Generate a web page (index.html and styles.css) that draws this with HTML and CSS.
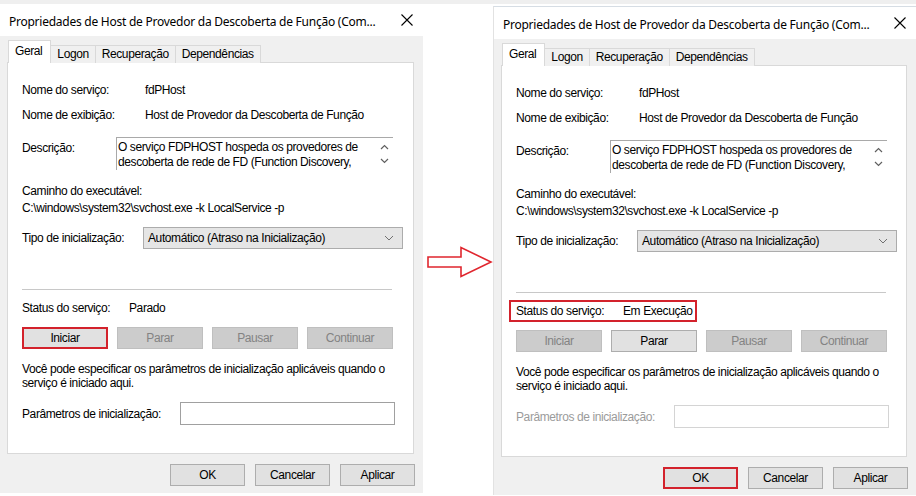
FILE: index.html
```html
<!DOCTYPE html>
<html lang="pt-BR">
<head>
    <meta charset="UTF-8">
    <title>Propriedades de Host de Provedor da Descoberta de Função</title>
    <link rel="stylesheet" href="styles.css">
</head>
<body>
<div class="screen">

    <!-- Antes: serviço parado -->
    <div class="dialog dialog-left">
        <div class="titlebar">
            <span class="title">Propriedades de Host de Provedor da Descoberta de Função (Com...</span>
            <svg class="close" width="12" height="12" viewBox="0 0 12 12"><path d="M0.5 0.5 L11.5 11.5 M11.5 0.5 L0.5 11.5" stroke="#000" stroke-width="1.1" fill="none"/></svg>
        </div>
        <div class="tabs">
            <span class="tab active">Geral</span>
            <span class="tab">Logon</span>
            <span class="tab">Recuperação</span>
            <span class="tab">Dependências</span>
        </div>
        <div class="panel">
            <div class="row row-name">
                <span class="label lbl-name">Nome do serviço:</span>
                <span>fdPHost</span>
            </div>
            <div class="row row-display">
                <span class="label lbl-name">Nome de exibição:</span>
                <span>Host de Provedor da Descoberta de Função</span>
            </div>
            <div class="row row-desc">
                <span class="label lbl-desc">Descrição:</span>
                <div class="desc-box">
                    <div class="desc-text">O serviço FDPHOST hospeda os provedores de descoberta de rede de FD (Function Discovery,</div>
                    <div class="desc-scroll">
                        <svg width="9" height="6" viewBox="0 0 9 6"><path d="M1 5 L4.5 1.5 L8 5" stroke="#606060" stroke-width="1.2" fill="none"/></svg>
                        <svg width="9" height="6" viewBox="0 0 9 6"><path d="M1 1 L4.5 4.5 L8 1" stroke="#606060" stroke-width="1.2" fill="none"/></svg>
                    </div>
                </div>
            </div>
            <div class="line row-path-title">Caminho do executável:</div>
            <div class="line row-path">C:\windows\system32\svchost.exe -k LocalService -p</div>
            <div class="row row-type">
                <span class="label lbl-type">Tipo de inicialização:</span>
                <div class="select">
                    <span>Automático (Atraso na Inicialização)</span>
                    <svg width="10" height="6" viewBox="0 0 10 6"><path d="M1 1 L5 5 L9 1" stroke="#707070" stroke-width="1" fill="none"/></svg>
                </div>
            </div>
            <div class="separator"></div>
            <div class="line row-status">
                <div class="status-box">
                    <span class="label lbl-status">Status do serviço:</span>
                    <span>Parado</span>
                </div>
            </div>
            <div class="service-buttons">
                <span class="btn marked">Iniciar</span>
                <span class="btn disabled">Parar</span>
                <span class="btn disabled">Pausar</span>
                <span class="btn disabled">Continuar</span>
            </div>
            <p class="hint">Você pode especificar os parâmetros de inicialização aplicáveis quando o serviço é iniciado aqui.</p>
            <div class="row row-params">
                <span class="label lbl-params">Parâmetros de inicialização:</span>
                <div class="input"></div>
            </div>
        </div>
        <div class="footer">
            <span class="btn btn-footer">OK</span>
            <span class="btn btn-footer">Cancelar</span>
            <span class="btn btn-footer">Aplicar</span>
        </div>
    </div>

    <!-- Seta entre as duas janelas -->
    <div class="gap">
        <svg width="66" height="32" viewBox="0 0 66 32"><polygon points="1,11 34,11 34,1.5 64,16 34,30.5 34,21 1,21" fill="#fff" stroke="#e0262e" stroke-width="1.6"/></svg>
    </div>

    <!-- Depois: serviço em execução -->
    <div class="dialog dialog-right">
        <div class="titlebar">
            <span class="title">Propriedades de Host de Provedor da Descoberta de Função (Com...</span>
            <svg class="close" width="12" height="12" viewBox="0 0 12 12"><path d="M0.5 0.5 L11.5 11.5 M11.5 0.5 L0.5 11.5" stroke="#000" stroke-width="1.1" fill="none"/></svg>
        </div>
        <div class="tabs">
            <span class="tab active">Geral</span>
            <span class="tab">Logon</span>
            <span class="tab">Recuperação</span>
            <span class="tab">Dependências</span>
        </div>
        <div class="panel">
            <div class="row row-name">
                <span class="label lbl-name">Nome do serviço:</span>
                <span>fdPHost</span>
            </div>
            <div class="row row-display">
                <span class="label lbl-name">Nome de exibição:</span>
                <span>Host de Provedor da Descoberta de Função</span>
            </div>
            <div class="row row-desc">
                <span class="label lbl-desc">Descrição:</span>
                <div class="desc-box">
                    <div class="desc-text">O serviço FDPHOST hospeda os provedores de descoberta de rede de FD (Function Discovery,</div>
                    <div class="desc-scroll">
                        <svg width="9" height="6" viewBox="0 0 9 6"><path d="M1 5 L4.5 1.5 L8 5" stroke="#606060" stroke-width="1.2" fill="none"/></svg>
                        <svg width="9" height="6" viewBox="0 0 9 6"><path d="M1 1 L4.5 4.5 L8 1" stroke="#606060" stroke-width="1.2" fill="none"/></svg>
                    </div>
                </div>
            </div>
            <div class="line row-path-title">Caminho do executável:</div>
            <div class="line row-path">C:\windows\system32\svchost.exe -k LocalService -p</div>
            <div class="row row-type">
                <span class="label lbl-type">Tipo de inicialização:</span>
                <div class="select">
                    <span>Automático (Atraso na Inicialização)</span>
                    <svg width="10" height="6" viewBox="0 0 10 6"><path d="M1 1 L5 5 L9 1" stroke="#707070" stroke-width="1" fill="none"/></svg>
                </div>
            </div>
            <div class="separator"></div>
            <div class="line row-status">
                <div class="status-box marked">
                    <span class="label lbl-status">Status do serviço:</span>
                    <span>Em Execução</span>
                </div>
            </div>
            <div class="service-buttons">
                <span class="btn disabled">Iniciar</span>
                <span class="btn">Parar</span>
                <span class="btn disabled">Pausar</span>
                <span class="btn disabled">Continuar</span>
            </div>
            <p class="hint">Você pode especificar os parâmetros de inicialização aplicáveis quando o serviço é iniciado aqui.</p>
            <div class="row row-params">
                <span class="label lbl-params off">Parâmetros de inicialização:</span>
                <div class="input off"></div>
            </div>
        </div>
        <div class="footer">
            <span class="btn btn-footer marked">OK</span>
            <span class="btn btn-footer">Cancelar</span>
            <span class="btn btn-footer">Aplicar</span>
        </div>
    </div>

</div>
</body>
</html>
```

FILE: styles.css
```css
/* Geral */
body, html {
    margin: 0;
    padding: 0;
    background: #fff;
    overflow: hidden;
}

body {
    font-family: "Liberation Sans", Arial, sans-serif;
    font-size: 12px;
    letter-spacing: -0.4px;
    color: #000;
}

.screen {
    display: flex;
    align-items: flex-start;
    border-top: 4px solid #efefef;
    height: 492px;
}

/* Janela */
.dialog {
    width: 423px;
    height: 489px;
    flex-shrink: 0;
    background: #f0f0f0;
    display: flex;
    flex-direction: column;
    box-sizing: border-box;
}

.dialog-right {
    margin-top: 2px;
    border-top: 1px solid #d6dde4;
    border-left: 1px solid #e2e2e2;
}

.titlebar {
    height: 32px;
    flex-shrink: 0;
    background: #fff;
    display: flex;
    align-items: center;
    justify-content: space-between;
    padding: 3px 10px 0 9px;
    box-sizing: border-box;
}

.title {
    font-family: "Noto Sans", "Liberation Sans", sans-serif;
    font-size: 12px;
    letter-spacing: -0.25px;
    white-space: nowrap;
}

.close {
    flex-shrink: 0;
    margin-top: -3px;
}

/* Abas */
.tabs {
    display: flex;
    align-items: flex-end;
    height: 22px;
    margin-top: 5px;
    margin-bottom: -1px;
    padding-left: 8px;
    position: relative;
    z-index: 1;
}

.tab {
    height: 17px;
    line-height: 17px;
    padding: 0 6px;
    background: #f0f0f0;
    border: 1px solid #d9d9d9;
    border-bottom: none;
    border-left: none;
}

.tab.active {
    height: 22px;
    line-height: 20px;
    padding: 0 8px 0 6px;
    background: #fff;
    border-left: 1px solid #d9d9d9;
}

.panel {
    height: 392px;
    margin: 0 9px 0 7px;
    padding-left: 14px;
    background: #fff;
    border: 1px solid #d9d9d9;
    box-sizing: border-box;
    flex-shrink: 0;
}

/* Linhas do formulário */
.row {
    display: flex;
    align-items: center;
}

.line {
    line-height: 14px;
    white-space: nowrap;
}

.label {
    flex-shrink: 0;
}

.row-name {
    height: 20px;
    margin-top: 17px;
}

.row-display {
    height: 20px;
    margin-top: 5px;
}

.lbl-name { width: 123px; }
.lbl-desc { width: 94px; padding-top: 4px; }
.lbl-type { width: 121px; }
.lbl-status { width: 107px; }
.lbl-params { width: 158px; }

.row-desc {
    margin-top: 12px;
    align-items: flex-start;
}

.desc-box {
    width: 277px;
    height: 33px;
    display: flex;
    border-top: 1px solid #a9a9a9;
    border-left: 1px solid #a9a9a9;
    box-sizing: border-box;
}

.desc-text {
    flex: 1;
    padding: 2px 0 0 1px;
    line-height: 15px;
}

.desc-scroll {
    width: 17px;
    display: flex;
    flex-direction: column;
    align-items: center;
    gap: 8px;
    padding-top: 6px;
}

.row-path-title { margin-top: 14px; }
.row-path { margin-top: 3px; }

.row-type {
    margin-top: 12px;
}

.select {
    width: 260px;
    height: 22px;
    display: flex;
    align-items: center;
    justify-content: space-between;
    padding: 0 8px 0 4px;
    background: #e5e5e5;
    border: 1px solid #acacac;
    box-sizing: border-box;
}

.separator {
    width: 370px;
    margin-top: 40px;
    border-top: 1px solid #c8c8c8;
}

.row-status {
    margin-top: 11px;
}

.status-box {
    display: inline-flex;
}

.status-box.marked {
    border: 2px solid #d3222c;
    padding: 2px 2px 2px 5px;
    margin: -4px -4px -4px -7px;
}

/* Botões */
.btn {
    display: flex;
    align-items: center;
    justify-content: center;
    height: 22px;
    background: #e1e1e1;
    border: 1px solid #adadad;
    box-sizing: border-box;
}

.btn.disabled {
    background: #cccccc;
    border-color: #bfbfbf;
    color: #838383;
}

.btn.marked {
    border: 2px solid #d3222c;
}

.service-buttons {
    display: grid;
    grid-template-columns: repeat(4, 86px);
    column-gap: 9px;
    margin-top: 12px;
}

.hint {
    margin: 13px 0 0;
    width: 375px;
    line-height: 14px;
}

.row-params {
    margin-top: 12px;
}

.input {
    width: 215px;
    height: 23px;
    border: 1px solid #a0a0a0;
    box-sizing: border-box;
    background: #fff;
}

.label.off {
    color: #9b9b9b;
}

.input.off {
    border-color: #d4d4d4;
}

.footer {
    display: flex;
    justify-content: flex-end;
    gap: 10px;
    margin-top: 10px;
    padding-right: 8px;
}

.btn-footer {
    width: 75px;
}

/* Seta */
.gap {
    width: 70px;
    flex-shrink: 0;
    padding-top: 242px;
    padding-left: 4px;
    box-sizing: border-box;
}
```
